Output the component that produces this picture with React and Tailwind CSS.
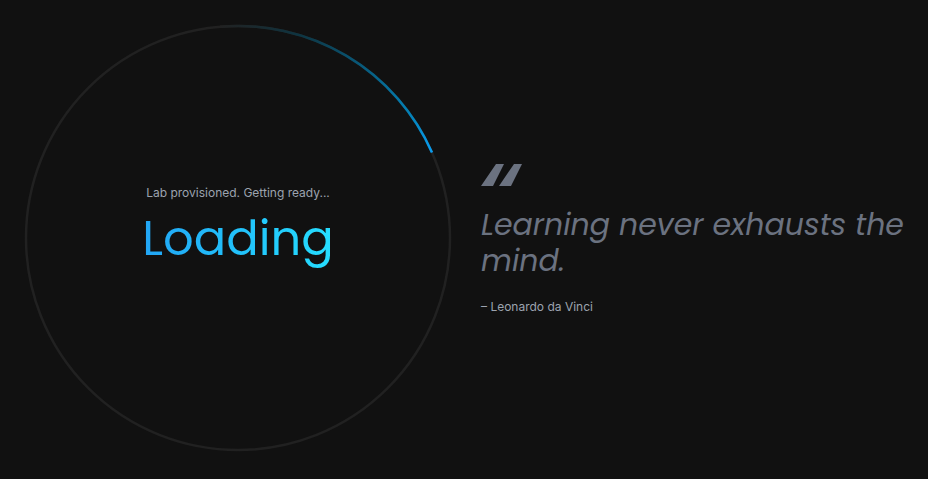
const poppins = "font-[Poppins,Inter,sans-serif]";

function ProgressRing() {
  return (
    <svg viewBox="0 0 426 426" fill="none" className="col-start-1 row-start-1 block h-auto w-full overflow-visible" aria-hidden="true">
      <defs>
        <linearGradient id="arc" gradientUnits="userSpaceOnUse" x1="195" y1="1" x2="407" y2="127">
          <stop offset="0" stopColor="#212121" />
          <stop offset="0.3" stopColor="#0e3542" />
          <stop offset="0.6" stopColor="#075d80" />
          <stop offset="0.85" stopColor="#0482b8" />
          <stop offset="1" stopColor="#0a9df0" />
        </linearGradient>
      </defs>
      <circle cx="213" cy="213" r="212" stroke="#212121" strokeWidth="2.5" />
      <path d="M195 1.77A212 212 0 0 1 407 127.5" stroke="url(#arc)" strokeWidth="2.5" />
    </svg>
  );
}

export default function App() {
  return (
    <main className="grid min-h-screen grid-cols-2 items-start gap-[30px] bg-[#111111] py-[25px] pr-[21px] pl-[25px] font-[Inter,sans-serif] text-[#9ca3af]">
      <section className="grid place-items-center" role="status">
        <ProgressRing />
        <div className="col-start-1 row-start-1 pb-[22px] text-center">
          <p className="text-xs leading-4">Lab provisioned. Getting ready...</p>
          <h1 className={`${poppins} mt-2 bg-linear-to-r from-[#22a5f5] to-[#26deff] bg-clip-text text-5xl leading-[60px] font-normal text-transparent`}>
            Loading
          </h1>
        </div>
      </section>
      <figure className="self-center">
        <svg width="41" height="22" viewBox="0 0 41 22" fill="#6b7280" aria-hidden="true">
          <path d="M0 22 15 0H23L12 22Z M18 22 33 0H41L30 22Z" />
        </svg>
        <blockquote className={`${poppins} mt-[21px] text-3xl leading-9 font-normal text-[#6b7280] italic`}>
          Learning never exhausts the mind.
        </blockquote>
        <figcaption className="mt-5 text-xs leading-4">– Leonardo da Vinci</figcaption>
      </figure>
    </main>
  );
}
